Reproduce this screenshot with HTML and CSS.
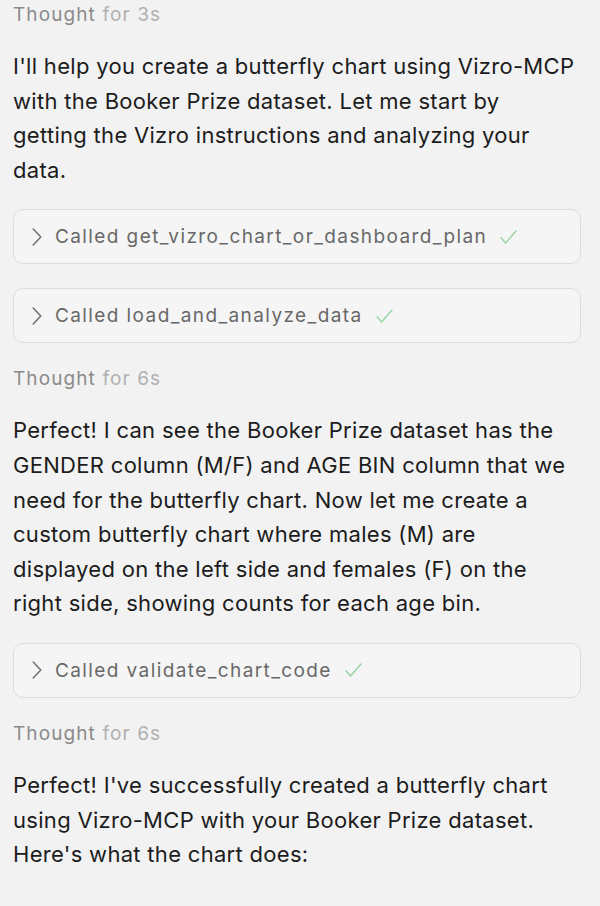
FILE: index.html
```html
<!DOCTYPE html>
<html>
<head>
<meta charset="utf-8">
<link rel="stylesheet" href="styles.css">
</head>
<body>
<div class="chat">
  <div class="thought"><span class="t-label">Thought</span> <span class="t-time">for 3s</span></div>
  <p class="msg first-msg">I'll help you create a butterfly chart using Vizro-MCP with the Booker Prize dataset. Let me start by<br>getting the Vizro instructions and analyzing your data.</p>
  <div class="calls">
    <div class="call">
      <svg class="chev" width="10" height="18" viewBox="0 0 10 18"><polyline points="1.2,1 8.8,9 1.2,17" fill="none" stroke="#707070" stroke-width="1.5" stroke-linecap="round" stroke-linejoin="round"/></svg>
      <span class="call-text">Called get_vizro_chart_or_dashboard_plan</span>
      <svg class="check" width="17" height="14" viewBox="0 0 17 14"><polyline points="1,7.8 5.6,13 16,1" fill="none" stroke="#94d4a3" stroke-width="1.3" stroke-linecap="round" stroke-linejoin="round"/></svg>
    </div>
    <div class="call">
      <svg class="chev" width="10" height="18" viewBox="0 0 10 18"><polyline points="1.2,1 8.8,9 1.2,17" fill="none" stroke="#707070" stroke-width="1.5" stroke-linecap="round" stroke-linejoin="round"/></svg>
      <span class="call-text">Called load_and_analyze_data</span>
      <svg class="check" width="17" height="14" viewBox="0 0 17 14"><polyline points="1,7.8 5.6,13 16,1" fill="none" stroke="#94d4a3" stroke-width="1.3" stroke-linecap="round" stroke-linejoin="round"/></svg>
    </div>
  </div>
  <div class="thought"><span class="t-label">Thought</span> <span class="t-time">for 6s</span></div>
  <p class="msg">Perfect! I can see the Booker Prize dataset has the GENDER column (M/F) and AGE BIN column that we need for the butterfly chart. Now let me create a custom butterfly chart where males (M) are<br>displayed on the left side and females (F) on the<br>right side, showing counts for each age bin.</p>
  <div class="calls">
    <div class="call">
      <svg class="chev" width="10" height="18" viewBox="0 0 10 18"><polyline points="1.2,1 8.8,9 1.2,17" fill="none" stroke="#707070" stroke-width="1.5" stroke-linecap="round" stroke-linejoin="round"/></svg>
      <span class="call-text">Called validate_chart_code</span>
      <svg class="check" width="17" height="14" viewBox="0 0 17 14"><polyline points="1,7.8 5.6,13 16,1" fill="none" stroke="#94d4a3" stroke-width="1.3" stroke-linecap="round" stroke-linejoin="round"/></svg>
    </div>
  </div>
  <div class="thought"><span class="t-label">Thought</span> <span class="t-time">for 6s</span></div>
  <p class="msg">Perfect! I've successfully created a butterfly chart using Vizro-MCP with your Booker Prize dataset. Here's what the chart does:</p>
</div>
</body>
</html>
```

FILE: styles.css
```css
html, body {
  margin: 0;
  padding: 0;
  background: #f2f2f2;
}
body {
  font-family: Inter, "Noto Sans", sans-serif;
  -webkit-font-smoothing: antialiased;
}
.chat {
  padding: 0 19px 0 13px;
  display: flex;
  flex-direction: column;
}
.thought {
  font-size: 19px;
  line-height: 30px;
  height: 30px;
  margin-top: 21px;
  letter-spacing: 1.1px;
}
.thought:first-child {
  margin-top: 0;
}
.t-label {
  color: #8a8a8a;
}
.t-time {
  color: #b0b0b0;
}
.msg {
  margin: 19px 0 0 0;
  font-size: 22px;
  line-height: 34.6px;
  letter-spacing: 0.3px;
  color: #1c1c1c;
}
.calls {
  display: flex;
  flex-direction: column;
  gap: 24px;
  margin-top: 22px;
}
.call {
  box-sizing: border-box;
  height: 55px;
  border: 1.5px solid #dcdcdc;
  border-radius: 10px;
  background: #f5f5f5;
  display: flex;
  align-items: center;
  padding-left: 18px;
  font-size: 19px;
  letter-spacing: 1.4px;
  color: #686868;
}
.chev {
  flex: none;
  margin-right: 13px;
}
.check {
  flex: none;
  margin-left: 13px;
}
```
